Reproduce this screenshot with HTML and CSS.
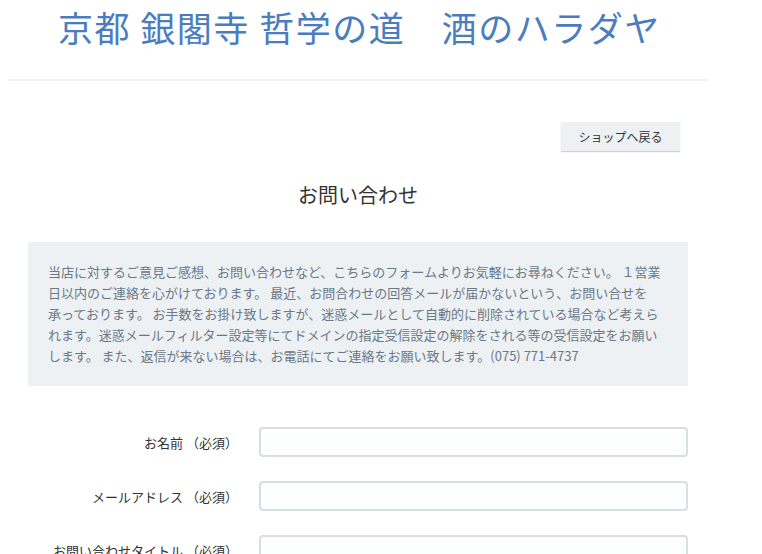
FILE: index.html
```html
<!DOCTYPE html>
<html lang="ja">
<head>
    <meta charset="UTF-8">
    <meta name="viewport" content="width=device-width, initial-scale=1.0">
    <title>お問い合わせ | 酒のハラダヤ</title>
    <link rel="stylesheet" href="styles.css">
</head>
<body>
    <header class="site-header">
        <h1 class="site-title">京都 銀閣寺 哲学の道　酒のハラダヤ</h1>
    </header>

    <main class="page">
        <div class="toolbar">
            <a class="back-btn" href="#">ショップへ戻る</a>
        </div>

        <h2 class="page-title">お問い合わせ</h2>

        <p class="notice">
            当店に対するご意見ご感想、お問い合わせなど、こちらのフォームよりお気軽にお尋ねください。 １営業<br>日以内のご連絡を心がけております。 最近、お問合わせの回答メールが届かないという、お問い合せを<br>承っております。 お手数をお掛け致しますが、迷惑メールとして自動的に削除されている場合など考えら<br>れます。迷惑メールフィルター設定等にてドメインの指定受信設定の解除をされる等の受信設定をお願い<br>します。 また、返信が来ない場合は、お電話にてご連絡をお願い致します。(075) 771-4737
        </p>

        <form class="contact-form">
            <div class="form-row">
                <label class="form-label" for="name">お名前 （必須）</label>
                <input class="form-input" id="name" type="text">
            </div>
            <div class="form-row">
                <label class="form-label" for="email">メールアドレス （必須）</label>
                <input class="form-input" id="email" type="email">
            </div>
            <div class="form-row">
                <label class="form-label" for="subject">お問い合わせタイトル （必須）</label>
                <input class="form-input" id="subject" type="text">
            </div>
        </form>
    </main>
</body>
</html>
```

FILE: styles.css
```css
* {
    margin: 0;
    padding: 0;
    box-sizing: border-box;
}

body {
    font-family: "Noto Sans CJK JP", "Noto Sans", sans-serif;
    color: #333;
    background-color: #fff;
}

.site-header {
    width: 700px;
    margin-left: 8px;
    height: 81px;
    border-bottom: 2px solid #f3f3f3;
}

.site-title {
    padding: 4px 0 0 50px;
    font-size: 35px;
    font-weight: normal;
    line-height: 46px;
    letter-spacing: 1.5px;
    color: #4a7dc0;
    white-space: nowrap;
}

.page {
    width: 660px;
    margin-left: 28px;
    padding-top: 41px;
}

.toolbar {
    display: flex;
    justify-content: flex-end;
    padding-right: 8px;
}

.back-btn {
    display: inline-block;
    width: 119px;
    height: 29px;
    line-height: 29px;
    text-align: center;
    font-size: 12px;
    color: #333;
    text-decoration: none;
    background: #eef1f4;
    box-shadow: 0 1px 1px rgba(0, 0, 0, 0.18);
}

.page-title {
    margin-top: 30px;
    text-align: center;
    font-size: 20px;
    font-weight: normal;
    line-height: 28px;
    color: #333;
}

.notice {
    margin-top: 33px;
    padding: 19px 20px 20px;
    background: #edf1f4;
    color: #6b7886;
    font-size: 13px;
    line-height: 21px;
    white-space: nowrap;
}

.contact-form {
    margin-top: 41px;
    display: flex;
    flex-direction: column;
    gap: 24px;
}

.form-row {
    display: flex;
    align-items: center;
    gap: 21px;
}

.form-label {
    width: 210px;
    text-align: right;
    font-size: 13px;
    color: #333;
    white-space: nowrap;
}

.form-input {
    width: 429px;
    height: 30px;
    border: 2px solid #d8dfe0;
    border-radius: 4px;
    background: #fdfefe;
    padding: 0 8px;
    font-family: inherit;
    font-size: 13px;
}
```
